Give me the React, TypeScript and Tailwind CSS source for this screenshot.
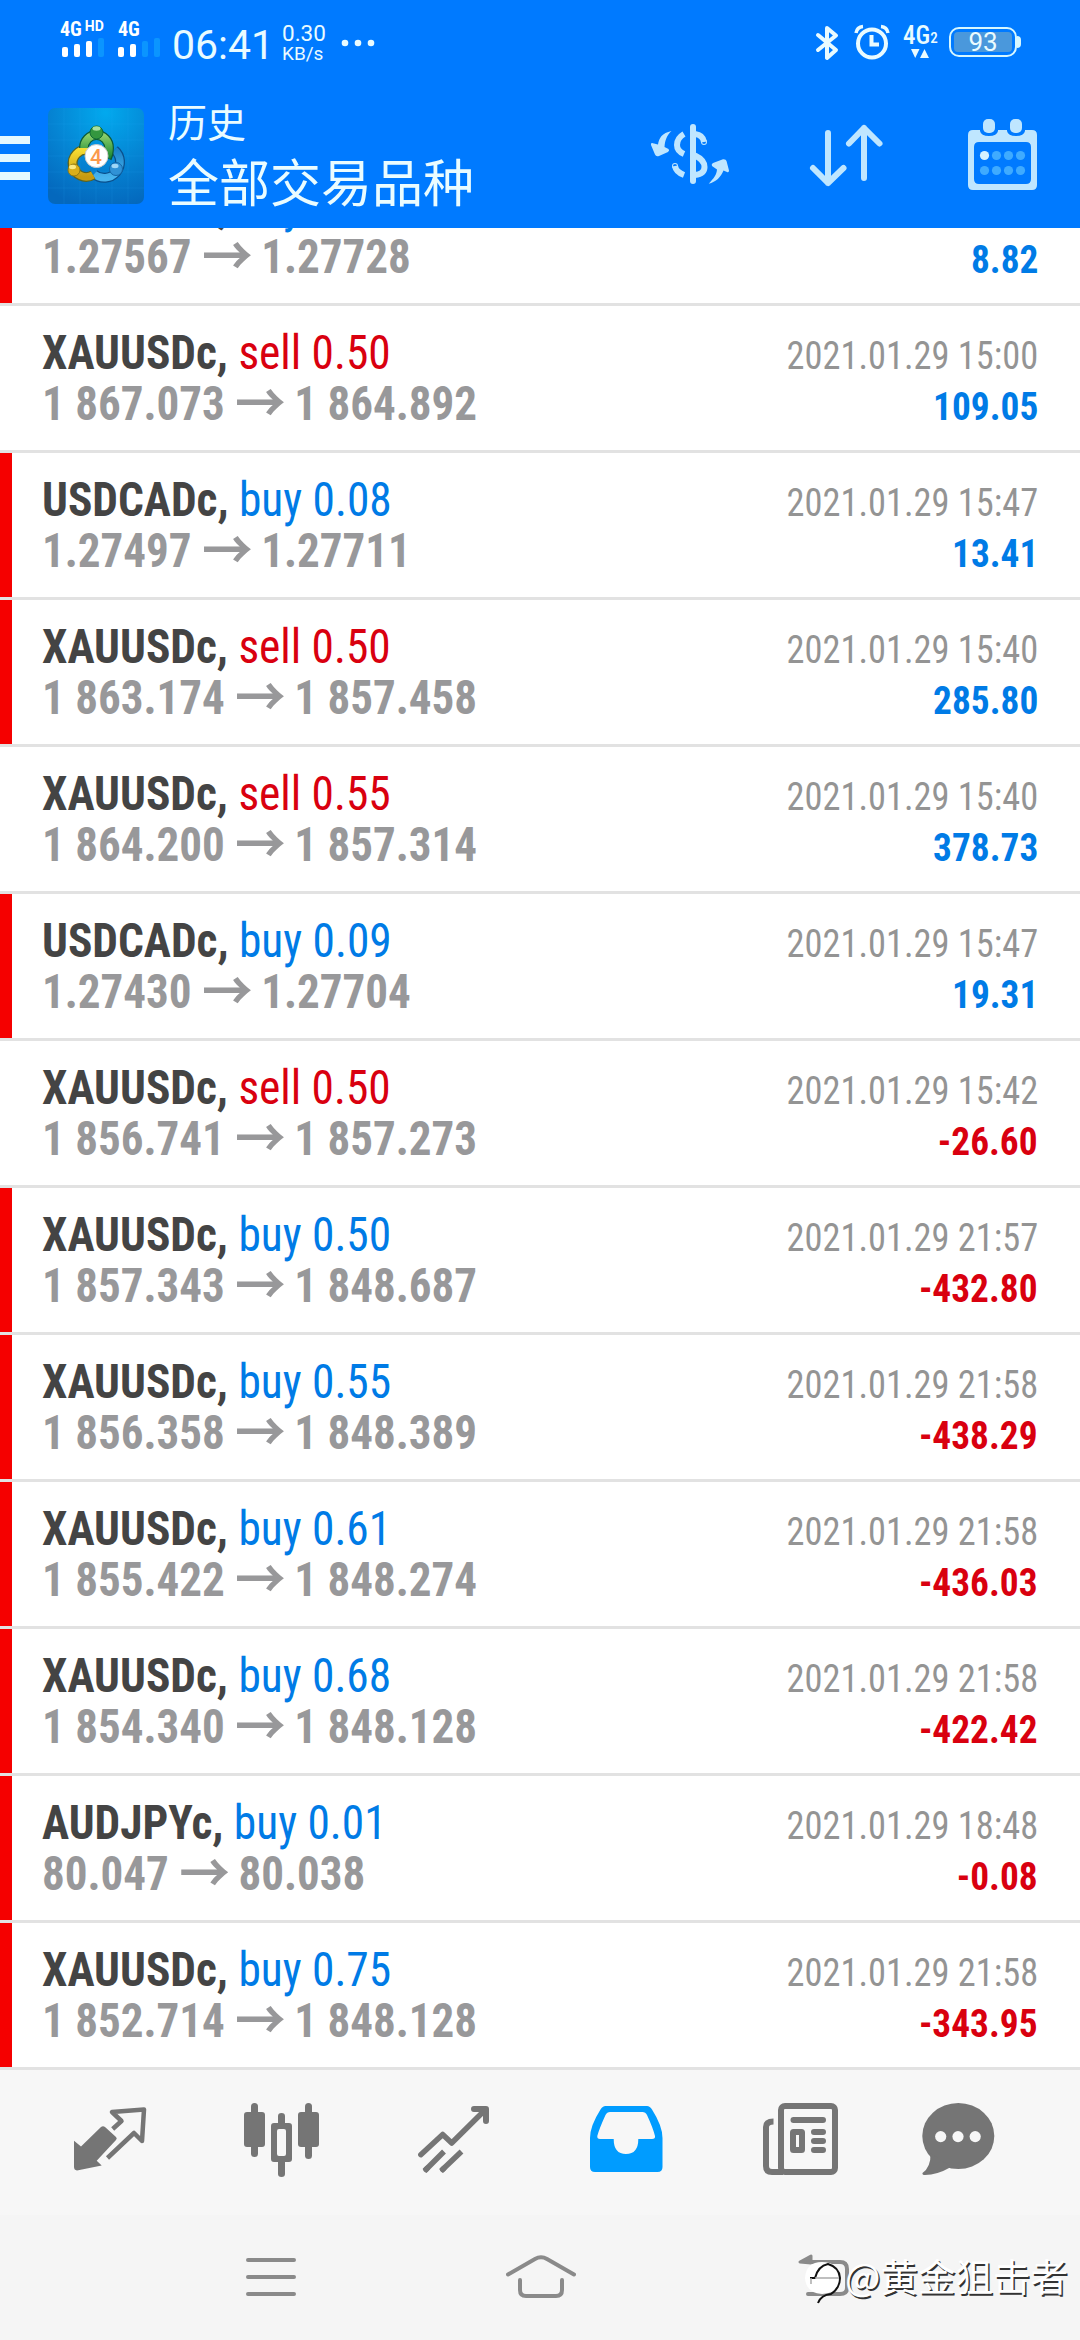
import { clsx } from "clsx";

interface Deal {
  symbol: string;
  side: "buy" | "sell";
  volume: string;
  open: string;
  close: string;
  time: string;
  profit: string;
  marked: boolean;
}

const deals: Deal[] = [
  { symbol: "USDCADc", side: "buy", volume: "0.08", open: "1.27567", close: "1.27728", time: "2021.01.29 15:47", profit: "8.82", marked: true },
  { symbol: "XAUUSDc", side: "sell", volume: "0.50", open: "1 867.073", close: "1 864.892", time: "2021.01.29 15:00", profit: "109.05", marked: false },
  { symbol: "USDCADc", side: "buy", volume: "0.08", open: "1.27497", close: "1.27711", time: "2021.01.29 15:47", profit: "13.41", marked: true },
  { symbol: "XAUUSDc", side: "sell", volume: "0.50", open: "1 863.174", close: "1 857.458", time: "2021.01.29 15:40", profit: "285.80", marked: true },
  { symbol: "XAUUSDc", side: "sell", volume: "0.55", open: "1 864.200", close: "1 857.314", time: "2021.01.29 15:40", profit: "378.73", marked: false },
  { symbol: "USDCADc", side: "buy", volume: "0.09", open: "1.27430", close: "1.27704", time: "2021.01.29 15:47", profit: "19.31", marked: true },
  { symbol: "XAUUSDc", side: "sell", volume: "0.50", open: "1 856.741", close: "1 857.273", time: "2021.01.29 15:42", profit: "-26.60", marked: false },
  { symbol: "XAUUSDc", side: "buy", volume: "0.50", open: "1 857.343", close: "1 848.687", time: "2021.01.29 21:57", profit: "-432.80", marked: true },
  { symbol: "XAUUSDc", side: "buy", volume: "0.55", open: "1 856.358", close: "1 848.389", time: "2021.01.29 21:58", profit: "-438.29", marked: true },
  { symbol: "XAUUSDc", side: "buy", volume: "0.61", open: "1 855.422", close: "1 848.274", time: "2021.01.29 21:58", profit: "-436.03", marked: true },
  { symbol: "XAUUSDc", side: "buy", volume: "0.68", open: "1 854.340", close: "1 848.128", time: "2021.01.29 21:58", profit: "-422.42", marked: true },
  { symbol: "AUDJPYc", side: "buy", volume: "0.01", open: "80.047", close: "80.038", time: "2021.01.29 18:48", profit: "-0.08", marked: true },
  { symbol: "XAUUSDc", side: "buy", volume: "0.75", open: "1 852.714", close: "1 848.128", time: "2021.01.29 21:58", profit: "-343.95", marked: true },
];

function SignalBars({ strength }: { strength: number }) {
  return (
    <svg width="42" height="19" viewBox="0 0 42 19">
      {[0, 1, 2, 3].map((i) => (
        <rect
          key={i}
          x={i * 12}
          y={9 - i * 3}
          width="6"
          height={10 + i * 3}
          rx="2"
          fill={i < strength ? "#fff" : "#0b95ff"}
        />
      ))}
    </svg>
  );
}

function StatusBar() {
  return (
    <div className="flex h-[84px] items-start text-[#e9fbff]">
      <div className="ml-[60px] mt-[19px] w-[58px] text-white">
        <div className="flex h-[19px] items-start text-[20px] leading-[20px] font-bold">
          <span className="font-stretch-[80%]">4G</span>
          <span className="ml-[3px] text-[14px] leading-[15px]">HD</span>
        </div>
        <div className="ml-[2px]">
          <SignalBars strength={3} />
        </div>
      </div>
      <div className="mt-[19px] w-[54px] text-white">
        <div className="h-[19px] text-[20px] leading-[20px] font-bold font-stretch-[80%]">4G</div>
        <SignalBars strength={2} />
      </div>
      <span className="mt-[21px] w-[110px] text-[41px] leading-[48px] whitespace-nowrap">06:41</span>
      <div className="mt-[23px] w-[58px] text-[22.500px] leading-[20px]">
        <div>0.30</div>
        <div className="text-[19px] leading-[22px]">KB/s</div>
      </div>
      <svg className="mt-[39px]" width="36" height="8" viewBox="0 0 36 8" fill="currentColor">
        <circle cx="5" cy="4" r="3.3" />
        <circle cx="18" cy="4" r="3.3" />
        <circle cx="31" cy="4" r="3.3" />
      </svg>

      <svg className="mt-[24px] ml-auto" width="24" height="38" viewBox="0 0 24 38" fill="none" stroke="currentColor" strokeWidth="4" strokeLinejoin="round" strokeLinecap="round">
        <path d="M3 11 L21 26 L12 34 V4 L21 11.500 L3 26" />
      </svg>
      <svg className="mt-[24px] ml-[15px]" width="36" height="37" viewBox="0 0 36 37" fill="none" stroke="currentColor">
        <circle cx="18" cy="19.500" r="14" strokeWidth="4" />
        <path d="M17.500 11 V20.500 H25" strokeWidth="4" />
        <path d="M2 9 Q3 3 9 2.500 M34 9 Q33 3 27 2.500" strokeWidth="3.500" />
      </svg>
      <div className="mt-[24px] ml-[13px] flex w-[36px] flex-col">
        <div className="flex items-end text-[25px] leading-[24px] font-medium font-stretch-[75%]">
          <span>4G</span>
          <span className="text-[15px] leading-[19px]">2</span>
        </div>
        <svg className="ml-[8px] mt-px" width="18" height="10" viewBox="0 0 18 10" fill="currentColor">
          <path d="M0 0 H8.500 L4.200 9 Z M9 9 H18 L13.500 0 Z" />
        </svg>
      </div>
      <div className="mt-[27px] ml-[10px] mr-[59px] flex items-center">
        <div className="flex h-[30px] w-[68px] items-center justify-center rounded-[10px] border-[2.500px] border-[#d6f7ff] p-[3px]">
          <span className="flex h-[20px] w-full items-center justify-center rounded-[4px] bg-[#4a98dc] text-[26px] leading-none">
            93
          </span>
        </div>
        <span className="h-[12px] w-[4px] rounded-r-full bg-[#d6f7ff]" />
      </div>
    </div>
  );
}

function AppLogo() {
  return (
    <svg className="ml-[18px] mt-[24px] shrink-0" width="96" height="96" viewBox="0 0 96 96">
      <defs>
        <radialGradient id="tile" cx="0.6" cy="0.05" r="1">
          <stop offset="0" stopColor="#02a9ee" />
          <stop offset="0.55" stopColor="#0584d3" />
          <stop offset="1" stopColor="#0468bd" />
        </radialGradient>
        <linearGradient id="green" x1="0" y1="0" x2="0" y2="1">
          <stop offset="0" stopColor="#8ccf6a" />
          <stop offset="1" stopColor="#1d8a35" />
        </linearGradient>
        <linearGradient id="gold" x1="0" y1="0" x2="0" y2="1">
          <stop offset="0" stopColor="#f6dc32" />
          <stop offset="1" stopColor="#c79a10" />
        </linearGradient>
        <linearGradient id="azure" x1="0" y1="0" x2="0" y2="1">
          <stop offset="0" stopColor="#1c83c9" />
          <stop offset="1" stopColor="#48b4ee" />
        </linearGradient>
      </defs>
      <rect width="96" height="96" rx="7" fill="url(#tile)" />
      <path d="M16 0V96 M32 0V96 M48 0V96 M64 0V96 M80 0V96 M0 16H96 M0 32H96 M0 48H96 M0 64H96 M0 80H96" stroke="#39b5f5" strokeOpacity="0.13" />
      <path d="M66.500 42 A15 15 0 0 1 46 66" fill="none" stroke="#0a4f8c" strokeWidth="10" />
      <path d="M66.500 42 A15 15 0 0 1 46 66" fill="none" stroke="url(#azure)" strokeWidth="7.500" />
      <path d="M40 42 A13.500 13.500 0 1 0 45 67" fill="none" stroke="#5b6321" strokeWidth="10" />
      <path d="M40 42 A13.500 13.500 0 1 0 45 67" fill="none" stroke="url(#gold)" strokeWidth="7.500" />
      <path d="M36 40 A12.500 13 0 0 1 61 40 Q61 46 59 50" fill="none" stroke="#0d5a38" strokeWidth="10" />
      <path d="M36 40 A12.500 13 0 0 1 61 40 Q61 46 59 49" fill="none" stroke="url(#green)" strokeWidth="7.500" />
      <circle cx="48.500" cy="24.500" r="6.500" fill="#34973f" stroke="#0f6b35" />
      <ellipse cx="48.500" cy="20.500" rx="4" ry="2.200" fill="#a9dfa0" />
      <circle cx="26" cy="62" r="6" fill="#d9ae18" stroke="#8d7815" />
      <ellipse cx="24.500" cy="59" rx="3.500" ry="2.200" fill="#fbe982" />
      <circle cx="68" cy="61" r="6.500" fill="#3092d6" stroke="#1264a5" />
      <ellipse cx="67" cy="58" rx="3.500" ry="2.200" fill="#9fd7f7" />
      <circle cx="48.500" cy="48" r="11.500" fill="#fff" stroke="#c9c9c9" />
      <text x="48" y="55.500" textAnchor="middle" fontSize="21" fontWeight="500" fill="#fb9a4b" fontFamily="Roboto, sans-serif">
        4
      </text>
    </svg>
  );
}

function Header() {
  return (
    <header className="flex h-[228px] shrink-0 flex-col bg-[#007aff]">
      <StatusBar />
      <div className="flex h-[144px] items-start">
        <svg className="mt-[52px] shrink-0" width="30" height="44" viewBox="0 0 30 44" fill="#e4f9ff">
          <rect width="30" height="8" />
          <rect y="18" width="30" height="8" />
          <rect y="36" width="30" height="8" />
        </svg>
        <AppLogo />
        <div className="mt-[11px] ml-[24px] font-['Noto_Sans_CJK_SC','Noto_Sans_CJK_TC',sans-serif] text-[#eafcff]">
          <div className="text-[39px] leading-[50px]">历史</div>
          <div className="text-[51px] leading-[70px]">全部交易品种</div>
        </div>
        <svg className="mt-[36px] ml-auto" width="80" height="68" viewBox="0 0 80 68" fill="#bfe6ff">
          <path d="M21.500 11 C12 13 9 18 8 24.500 L2 23 Q0.500 23 1 25 L5 34.500 Q6 37 9 36 L18 32 Q20 30.500 18.500 29 L14.500 27 C15 20 17 15 21.500 11 Z" />
          <path d="M58.700 63.700 C64 58 66.500 55 67 49.500 L62 46 Q61 44 63 43 L73 39.300 Q76 39 76.500 41 L79 50.500 Q79 53 77 52 L73.500 50.500 C71 57 66 62 58.700 63.700 Z" />
          <rect x="40" y="4" width="6" height="60" rx="3" />
          <g fill="none" stroke="#bfe6ff" strokeWidth="6">
            <path d="M34 14 Q27 18 27 25 Q27 31 34 34" />
            <path d="M45 14 Q53 15 54 22" />
            <circle cx="54" cy="22" r="0.500" strokeWidth="5" />
            <path d="M45 35.500 Q54.500 40 54.500 47 Q54.500 54 45 55" />
            <path d="M25 46 Q26 52 34 55" />
            <circle cx="25" cy="46" r="0.500" strokeWidth="5" />
          </g>
        </svg>
        <svg className="mt-[38px] ml-[78px]" width="76" height="68" viewBox="0 0 76 68" fill="none" stroke="#bfe6ff" strokeWidth="6" strokeLinecap="round" strokeLinejoin="round">
          <path d="M20 11V61 M5 46 L20 61 L35.500 46" />
          <path d="M56 56V6 M41 21.500 L56 6 L71.500 21.500" />
        </svg>
        <svg className="mt-[35px] ml-[84px] mr-[43px]" width="69" height="71" viewBox="0 0 69 71">
          <path fillRule="evenodd" fill="#bfe6ff" d="M5 11 H64 Q69 11 69 16 V66 Q69 71 64 71 H5 Q0 71 0 66 V16 Q0 11 5 11 Z M11 23 Q6 23 6 28 V60 Q6 65 11 65 H58 Q63 65 63 60 V28 Q63 23 58 23 Z" />
          <path d="M12 8 V12 Q13 17 21 17 Q29 17 30 12 V8 Z M39 8 V12 Q40 17 48 17 Q56 17 57 12 V8 Z" fill="#007aff" />
          <rect x="15" width="12" height="14" rx="5" fill="#bfe6ff" />
          <rect x="42" width="12" height="14" rx="5" fill="#bfe6ff" />
          {[36.5, 51.5].map((cy) =>
            [16.5, 28.5, 40.5, 52.5].map((cx) => (
              <circle key={`${cx}-${cy}`} cx={cx} cy={cy} r="4.600" fill={cx === 16.5 && cy === 36.5 ? "#d4f1ff" : "#3fabff"} />
            ))
          )}
        </svg>
      </div>
    </header>
  );
}

function DealRow({ deal }: { deal: Deal }) {
  return (
    <div className="flex h-[147px] shrink-0 border-b-3 border-[#e2e2e2]">
      <div className={clsx("w-[12px] shrink-0", deal.marked && "bg-[#f50000]")} />
      <div className="flex-1 pt-[21px] pr-[42px] pl-[30px] text-[48px] leading-[51px] whitespace-pre font-stretch-[75%]">
        <div className="flex h-[51px] items-baseline justify-between">
          <div className="origin-left scale-x-[0.945]">
            <span className="font-bold text-[#444]">{deal.symbol}, </span>
            <span className={deal.side === "buy" ? "text-[#007be6]" : "text-[#d9000f]"}>
              {deal.side} {deal.volume}
            </span>
          </div>
          <span className="origin-right scale-x-[0.921] text-[39.500px] text-[#949494]">{deal.time}</span>
        </div>
        <div className="flex h-[51px] items-baseline justify-between font-bold">
          <div className="flex origin-left scale-x-[0.938] items-baseline text-[#98989a]">
            <span>{deal.open} </span>
            <span className="mr-[-2px] translate-y-[3px] font-['Noto_Sans_CJK_SC',sans-serif] text-[54px] leading-[0px]">→</span>
            <span> {deal.close}</span>
          </div>
          <span
            className={clsx(
              "origin-right scale-x-[0.945] text-[39.500px]",
              deal.profit.startsWith("-") ? "text-[#d9000f]" : "text-[#007be6]"
            )}
          >
            {deal.profit}
          </span>
        </div>
      </div>
    </div>
  );
}

function TabBar() {
  return (
    <nav className="flex h-[145px] shrink-0 items-start bg-[#f7f7f7] text-[#757575]">
      <svg className="mt-[37px] ml-[74px]" width="74" height="66" viewBox="0 0 74 66">
        <path fill="currentColor" d="M0 33.700 L7 39.500 L27 20 Q29 18.500 31 20 L42 30 Q43.500 31.700 42 33 L22.700 53.700 L27.700 58.500 L3 63.500 Q0 63 0 60 Z" />
        <path fill="none" stroke="currentColor" strokeWidth="4.500" strokeLinejoin="round" d="M38.700 22 L47.500 14 L38 5 L70 2.500 L68 34 L60 26 L33.500 51" />
      </svg>
      <svg className="mt-[33px] ml-[96px]" width="75" height="74" viewBox="0 0 75 74" fill="currentColor">
        <rect y="9" width="21" height="35" rx="3" />
        <rect x="7" width="7" height="54" rx="3.500" />
        <path fillRule="evenodd" d="M30 20 H45 Q48 20 48 23 V56 Q48 59 45 59 H30 Q27 59 27 56 V23 Q27 20 30 20 Z M35 26 Q33 26 33 28 V51 Q33 53 35 53 H40 Q42 53 42 51 V28 Q42 26 40 26 Z" />
        <path d="M34 21 V13 Q34 10 37.500 10 Q41 10 41 13 V21 Z M34 58 V71 Q34 74 37.500 74 Q41 74 41 71 V58 Z" />
        <rect x="54" y="9" width="21" height="35" rx="3" />
        <rect x="61" width="7" height="56" rx="3.500" />
      </svg>
      <svg className="mt-[36px] ml-[99px]" width="72" height="67" viewBox="0 0 72 67" fill="none" stroke="currentColor" strokeWidth="5.500" strokeLinejoin="round">
        <path strokeLinecap="round" d="M2.800 48.700 L24.700 28.500 L33.700 37 L67 4" />
        <path strokeLinecap="round" strokeWidth="6" d="M56 3 H68 V15" />
        <path d="M6.500 65 L26 45.500 M23 65 L43.500 45.500" />
        <path strokeLinecap="round" d="M8 63.500 L9 62.500 M24.700 63.500 L25.700 62.500" />
      </svg>
      <svg className="mt-[36px] ml-[100px]" width="73" height="66" viewBox="0 0 73 66">
        <path fill="#009cff" fillRule="evenodd" d="M15.500 0 H57 Q60 0 62 3.500 Q72.500 20 72.500 32 V61 Q72.500 66 67.500 66 H5 Q0 66 0 61 V32 Q0 20 10.500 3.500 Q12.500 0 15.500 0 Z M20 6 Q17 6 15.500 9 Q9.500 22 7.300 30 Q7 33 10 33 H23.700 Q23.700 48 36 48 Q48.300 48 48.300 33 H62 Q65.500 33 65 30 Q63 22 57 9 Q55.500 6 52.500 6 Z" />
      </svg>
      <svg className="mt-[33px] ml-[100px]" width="75" height="72" viewBox="0 0 75 72" fill="none" stroke="currentColor" strokeWidth="6">
        <rect x="18" y="3" width="54" height="66" rx="4" />
        <path d="M10.500 18.500 Q3 18.500 3 24 V63 Q3 69 9 69 H20" />
        <path strokeLinecap="round" d="M30.500 17 H60 M51 29 H60 M51 38 H60 M51 47 H60" />
        <rect x="30" y="29" width="9" height="18" rx="0.500" />
      </svg>
      <svg className="mt-[33px] ml-[84px]" width="73" height="72" viewBox="0 0 73 72">
        <ellipse cx="36.300" cy="33" rx="36" ry="33" fill="currentColor" />
        <path fill="currentColor" d="M8.500 50 Q9 64 0.500 70 Q0 72 3 72 Q15 72 29 64 Z" />
        <g fill="#f7f7f7">
          <circle cx="18.700" cy="33.600" r="5.600" />
          <circle cx="36" cy="33.600" r="5.600" />
          <circle cx="53.200" cy="33.600" r="5.600" />
        </g>
      </svg>
    </nav>
  );
}

function SystemNav() {
  return (
    <div className="relative flex h-[125px] shrink-0 items-start bg-[#f5f5f5]">
      <svg className="mt-[43px] ml-[246px]" width="50" height="38" viewBox="0 0 50 38" stroke="#8a8a8a" strokeWidth="4" strokeLinecap="round">
        <path d="M2 2H48 M2 19H48 M2 36H48" />
      </svg>
      <svg className="mt-[39px] ml-[210px]" width="70" height="44" viewBox="0 0 70 44" fill="none" stroke="#8a8a8a" strokeWidth="4" strokeLinecap="round">
        <path d="M2 20.500 L29 5 Q35 1.500 41 5 L68 20.500" />
        <path d="M14 26 V36 Q14 42 20 42 H50 Q56 42 56 36 V26" />
      </svg>
      <svg className="mt-[39px] ml-[222px]" width="52" height="44" viewBox="0 0 52 44" fill="none" stroke="#8a8a8a" strokeWidth="4" strokeLinecap="round">
        <path d="M14 8 H42 Q49 8 49 15 V34 Q49 40 42 40 H10" />
        <path d="M2 8 L13 2 V9 Z" fill="#8a8a8a" strokeWidth="3" strokeLinejoin="round" />
      </svg>
      <div className="absolute top-[33px] left-[803px] flex items-center">
        <svg width="42" height="58" viewBox="0 0 42 58" fill="none">
          <path d="M19 14 Q36 14 37 30 Q37 45 19 46 Q3 45 2 30 Q3 14 19 14 Z" fill="#fff" />
          <path d="M7 30 H12 Q15 18 25 16 Q36 19 37 30 Q37 40 28 46 Q18 47 15 55" stroke="#111" strokeWidth="2" />
          <path d="M12 30 H36 M8 30 V36" stroke="#aaa" strokeWidth="1.500" />
        </svg>
        <span className="-mt-[4px] font-['Noto_Sans_CJK_SC',sans-serif] text-[37.500px] leading-[54px] whitespace-nowrap text-white [text-shadow:1.5px_1.5px_0.5px_#333]">
          @黄金狙击者
        </span>
      </div>
    </div>
  );
}

export default function App() {
  return (
    <div className="flex h-[2340px] w-[1080px] flex-col overflow-hidden bg-white font-['Roboto',sans-serif]">
      <Header />
      <main className="flex min-h-0 flex-1 flex-col justify-end overflow-hidden">
        {deals.map((deal, i) => (
          <DealRow key={i} deal={deal} />
        ))}
      </main>
      <TabBar />
      <SystemNav />
    </div>
  );
}
